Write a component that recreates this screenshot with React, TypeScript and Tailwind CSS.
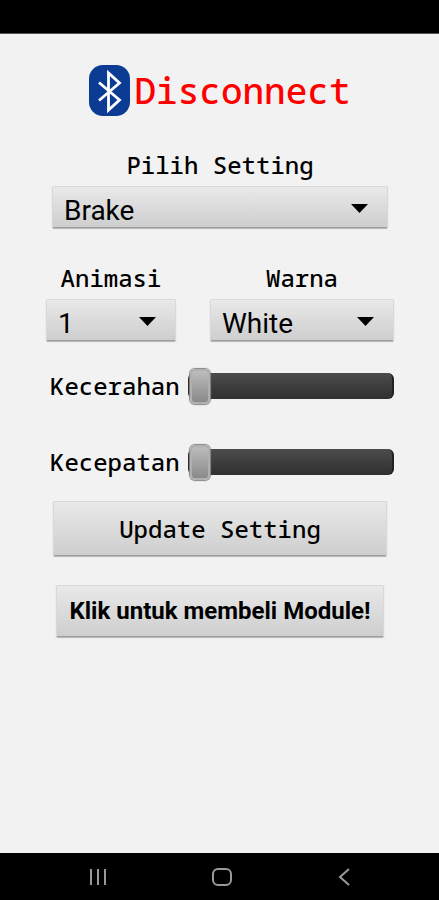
import { useState } from "react";

const MONO = "font-['Noto_Sans_Mono','Droid_Sans_Mono','DejaVu_Sans_Mono',monospace] font-medium";
const SURFACE =
    "rounded-xs border border-[#d8d8d8] border-b-[#9c9c9c] bg-linear-to-b from-[#e9e9e9] to-[#cecece] text-black shadow-[0_1px_1px_#b4b4b4]";

function BluetoothLogo() {
    return (
        <svg width="41" height="51" viewBox="0 0 41 51" fill="none" aria-hidden="true">
            <rect width="41" height="51" rx="14" fill="#0b3b92" />
            <path d="M10 17.5 30.5 35 19.5 45V8L30.5 18 10 35.5" stroke="#fff" strokeWidth="2.8" />
        </svg>
    );
}

type DropdownProps = {
    id: string;
    label: string;
    options: string[];
};

function Dropdown({ id, label, options }: DropdownProps) {
    const [value, setValue] = useState(options[0]);

    return (
        <div className="flex flex-col">
            <label htmlFor={id} className={`${MONO} pb-1.5 text-center text-2xl leading-[30px]`}>
                {label}
            </label>
            <div className="relative">
                <select
                    id={id}
                    value={value}
                    onChange={(e) => setValue(e.target.value)}
                    className={`${SURFACE} h-[42px] w-full appearance-none pt-1.5 pl-[11px] font-[Roboto,sans-serif] text-[28px] leading-9`}
                >
                    {options.map((option) => (
                        <option key={option}>{option}</option>
                    ))}
                </select>
                <svg
                    className="pointer-events-none absolute top-[18px] right-5"
                    width="17"
                    height="9"
                    viewBox="0 0 17 9"
                    aria-hidden="true"
                >
                    <path d="M0 0h17L8.5 9z" fill="#000" />
                </svg>
            </div>
        </div>
    );
}

function Slider({ id, label }: { id: string; label: string }) {
    const [value, setValue] = useState(0);

    return (
        <div className="flex h-[38px] items-center gap-2 pl-1">
            <label htmlFor={id} className={`${MONO} text-2xl`}>
                {label}
            </label>
            <input
                id={id}
                type="range"
                min={0}
                max={100}
                value={value}
                onChange={(e) => setValue(Number(e.target.value))}
                className="h-[26px] min-w-0 flex-1 appearance-none rounded-md border-x-2 border-[#222] bg-linear-to-b from-[#4c4c4c] to-[#303030] [&::-webkit-slider-thumb]:h-[35px] [&::-webkit-slider-thumb]:w-5 [&::-webkit-slider-thumb]:appearance-none [&::-webkit-slider-thumb]:rounded-[5px] [&::-webkit-slider-thumb]:border-2 [&::-webkit-slider-thumb]:border-[#b0b0b0] [&::-webkit-slider-thumb]:bg-linear-to-b [&::-webkit-slider-thumb]:from-[#bcbcbc] [&::-webkit-slider-thumb]:to-[#8a8a8a] [&::-webkit-slider-thumb]:shadow-[0_0_1px_1px_#888]"
            />
        </div>
    );
}

function NavigationBar() {
    return (
        <nav className="flex h-[47px] items-center justify-between bg-black pr-20 pl-[84px] text-[#999]">
            <button type="button" aria-label="Recents">
                <svg width="28" height="20" viewBox="0 0 28 20" stroke="currentColor" strokeWidth="2">
                    <path d="M7 2v16M14 2v16M21 2v16" />
                </svg>
            </button>
            <button type="button" aria-label="Home">
                <svg width="28" height="20" viewBox="0 0 28 20" fill="none" stroke="currentColor" strokeWidth="2">
                    <rect x="5" y="2" width="18" height="16" rx="5" />
                </svg>
            </button>
            <button type="button" aria-label="Back">
                <svg width="28" height="20" viewBox="0 0 28 20" fill="none" stroke="currentColor" strokeWidth="2">
                    <path d="M18 2 9 10l9 8" />
                </svg>
            </button>
        </nav>
    );
}

function App() {
    return (
        <div className="flex min-h-screen flex-col bg-[#f2f2f2] text-black">
            <div className="h-[34px] border-b border-[#555] bg-black" />

            <main className="flex flex-1 flex-col pt-[31px] pr-[45px] pl-[46px]">
                <header className="flex items-center justify-center gap-1">
                    <BluetoothLogo />
                    <h1 className={`${MONO} text-4xl leading-[50px] text-[#ff0000]`}>Disconnect</h1>
                </header>

                <div className="mt-[34px] px-1.5">
                    <Dropdown id="setting" label="Pilih Setting" options={["Brake", "Sein", "Senja"]} />
                </div>

                <div className="mt-[35px] grid grid-cols-[130fr_184fr] gap-[34px]">
                    <Dropdown id="animasi" label="Animasi" options={["1", "2", "3"]} />
                    <Dropdown id="warna" label="Warna" options={["White", "Red", "Blue"]} />
                </div>

                <div className="mt-[26px] flex flex-col gap-[38px]">
                    <Slider id="kecerahan" label="Kecerahan" />
                    <Slider id="kecepatan" label="Kecepatan" />
                </div>

                <div className="mt-5 flex flex-col gap-[29px] px-[7px]">
                    <button type="button" className={`${SURFACE} ${MONO} h-[55px] text-2xl`}>
                        Update Setting
                    </button>
                    <button
                        type="button"
                        className={`${SURFACE} mx-[3px] h-[52px] font-[Roboto,sans-serif] text-2xl font-bold whitespace-nowrap`}
                    >
                        Klik untuk membeli Module!
                    </button>
                </div>
            </main>

            <NavigationBar />
        </div>
    );
}

export default App;
